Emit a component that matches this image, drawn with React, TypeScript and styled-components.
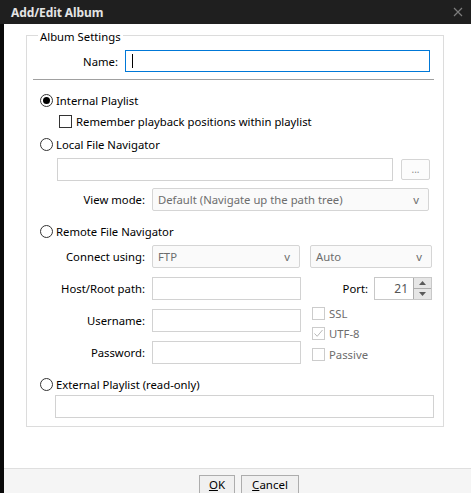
import React from 'react';
import styled, { createGlobalStyle } from 'styled-components';

const GlobalStyle = createGlobalStyle`
    html, body {
        margin: 0;
        padding: 0;
        background: #000;
    }
    body {
        font-family: "Noto Sans", "Open Sans", sans-serif;
        font-size: 11.3px;
        color: #000;
    }
`;

const Window = styled.div`
    width: 471px;
    height: 493px;
    display: flex;
    flex-direction: column;
    overflow: hidden;
    background: #0a0a0a;
`;

const TitleBar = styled.div`
    height: 24px;
    flex: none;
    display: flex;
    align-items: center;
    justify-content: space-between;
    background: #1f1f1f;
    padding: 0 8px 0 11px;
    box-sizing: border-box;
`;

const Title = styled.span`
    font-weight: 700;
    font-size: 12px;
    color: #e4e4e4;
    letter-spacing: -0.1px;
`;

const Body = styled.div`
    flex: 1;
    margin-left: 4px;
    display: flex;
    flex-direction: column;
    background: #fff;
    min-height: 0;
`;

const Content = styled.div`
    flex: 1;
    padding: 2px 0 0 22px;
`;

const Group = styled.fieldset`
    width: 415px;
    box-sizing: border-box;
    margin: 0;
    padding: 0 9px 8px 6px;
    border: 1px solid #dcdcdc;
`;

const Legend = styled.legend`
    margin-left: 5px;
    padding: 4px 2px 0;
    line-height: 14px;
`;

const Row = styled.div<{ $top: number; $indent?: number; $gap?: number }>`
    display: flex;
    align-items: center;
    margin-top: ${p => p.$top}px;
    padding-left: ${p => p.$indent ?? 0}px;
    gap: ${p => p.$gap ?? 7}px;
`;

const Label = styled.span<{ $width: number }>`
    width: ${p => p.$width}px;
    flex: none;
    text-align: right;
    white-space: nowrap;
`;

const TextBox = styled.div<{ $width: number; $focused?: boolean; $height?: number }>`
    width: ${p => p.$width}px;
    height: ${p => p.$height ?? 23}px;
    flex: none;
    box-sizing: border-box;
    border: 1px solid ${p => (p.$focused ? '#0078d7' : '#d2d2d2')};
    background: #fff;
    display: flex;
    align-items: center;
    padding-left: 6px;
`;

const Caret = styled.span`
    width: 1px;
    height: 14px;
    background: #000;
`;

const Separator = styled.div`
    height: 1px;
    background: #a0a0a0;
    margin-top: 7px;
`;

const OptionRow = styled.label<{ $top: number; $indent?: number; $disabled?: boolean }>`
    display: flex;
    align-items: center;
    height: 16px;
    gap: 3px;
    margin-top: ${p => p.$top}px;
    padding-left: ${p => p.$indent ?? 0}px;
    color: ${p => (p.$disabled ? '#6d6d6d' : '#000')};
    white-space: nowrap;
`;

const Radio = styled.span<{ $checked?: boolean }>`
    width: 13px;
    height: 13px;
    box-sizing: border-box;
    border: 1px solid #333;
    border-radius: 50%;
    flex: none;
    display: flex;
    align-items: center;
    justify-content: center;
    &::after {
        content: '';
        display: ${p => (p.$checked ? 'block' : 'none')};
        width: 7px;
        height: 7px;
        border-radius: 50%;
        background: #000;
    }
`;

const Check = styled.span<{ $disabled?: boolean }>`
    width: 13px;
    height: 13px;
    box-sizing: border-box;
    border: 1px solid ${p => (p.$disabled ? '#cccccc' : '#333')};
    flex: none;
    display: flex;
    align-items: center;
    justify-content: center;
    margin-right: 1px;
`;

const Combo = styled.div<{ $width: number }>`
    width: ${p => p.$width}px;
    height: 23px;
    flex: none;
    box-sizing: border-box;
    border: 1px solid #d5d5d5;
    border-radius: 2px;
    background: #fafafa;
    color: #6d6d6d;
    display: flex;
    align-items: center;
    justify-content: space-between;
    padding: 0 9px 0 5px;
    white-space: nowrap;
`;

const Browse = styled.div`
    width: 29px;
    height: 21px;
    box-sizing: border-box;
    border: 1px solid #d5d5d5;
    border-radius: 2px;
    background: #fcfcfc;
    color: #8a8a8a;
    display: flex;
    align-items: center;
    justify-content: center;
    font-size: 10px;
    padding-bottom: 2px;
`;

const RemoteGrid = styled.div`
    display: flex;
    margin-top: 9px;
`;

const Column = styled.div<{ $gap: number }>`
    display: flex;
    flex-direction: column;
    gap: ${p => p.$gap}px;
`;

const RightColumn = styled.div`
    display: flex;
    flex-direction: column;
    width: 122px;
    margin-left: 9px;
`;

const CheckStack = styled.div`
    display: flex;
    flex-direction: column;
    margin-top: 3px;
    padding-left: 2px;
`;

const CheckLine = styled.div`
    height: 20.5px;
    display: flex;
    align-items: center;
    gap: 3px;
    color: #6d6d6d;
`;

const Spin = styled.div`
    width: 58px;
    height: 23px;
    flex: none;
    box-sizing: border-box;
    border: 1px solid #c8c8c8;
    display: flex;
    background: #fff;
`;

const SpinValue = styled.span`
    flex: 1;
    text-align: right;
    padding-right: 5px;
    align-self: center;
    color: #555;
    font-size: 12px;
`;

const SpinArrows = styled.div`
    width: 17px;
    display: flex;
    flex-direction: column;
    border-left: 1px solid #adadad;
    gap: 1px;
    background: #adadad;
`;

const SpinButton = styled.div`
    flex: 1;
    background: #e6e6e6;
    display: flex;
    align-items: center;
    justify-content: center;
`;

const Footer = styled.div`
    height: 25px;
    box-sizing: border-box;
    flex: none;
    border-top: 1px solid #dfdfdf;
    background: #f5f5f5;
    display: flex;
    align-items: flex-start;
    gap: 6px;
    padding: 6px 0 0 195px;
`;

const Button = styled.div<{ $width: number }>`
    width: ${p => p.$width}px;
    height: 23px;
    flex: none;
    box-sizing: border-box;
    border: 1px solid #adadad;
    background: #f0f0f0;
    display: flex;
    justify-content: center;
    padding-top: 2px;
    font-size: 11.5px;
    line-height: 14px;
    & u {
        text-decoration-thickness: 1px;
        text-underline-offset: 1px;
    }
`;

const CloseIcon = () => (
    <svg width="10" height="10" viewBox="0 0 10 10">
        <path d="M1 1 L9 9 M9 1 L1 9" stroke="#7c7c7c" strokeWidth="1.2" />
    </svg>
);

const TickIcon = () => (
    <svg width="11" height="11" viewBox="0 0 11 11">
        <path d="M1.5 5.5 L4.2 8.3 L9.5 2" stroke="#b8b8b8" strokeWidth="1" fill="none" />
    </svg>
);

const Triangle = ({ up }: { up?: boolean }) => (
    <svg width="7" height="4" viewBox="0 0 7 4">
        <path d={up ? 'M0 4 L3.5 0 L7 4 Z' : 'M0 0 L3.5 4 L7 0 Z'} fill="#5a5a5a" />
    </svg>
);

export default function App() {
    return (
        <>
            <GlobalStyle />
            <Window>
                <TitleBar>
                    <Title>Add/Edit Album</Title>
                    <CloseIcon />
                </TitleBar>
                <Body>
                    <Content>
                        <Group>
                            <Legend>Album Settings</Legend>
                            <Row $top={6}>
                                <Label $width={85}>Name:</Label>
                                <TextBox $width={305} $height={22} $focused>
                                    <Caret />
                                </TextBox>
                            </Row>
                            <Separator />

                            <OptionRow $top={12} $indent={7}>
                                <Radio $checked />
                                Internal Playlist
                            </OptionRow>
                            <OptionRow $top={5} $indent={26}>
                                <Check />
                                Remember playback positions within playlist
                            </OptionRow>

                            <OptionRow $top={7} $indent={7}>
                                <Radio />
                                Local File Navigator
                            </OptionRow>
                            <Row $top={6} $indent={24} $gap={8}>
                                <TextBox $width={336} />
                                <Browse>...</Browse>
                            </Row>
                            <Row $top={7}>
                                <Label $width={112}>View mode:</Label>
                                <Combo $width={277}>
                                    <span>Default (Navigate up the path tree)</span>
                                    <span>v</span>
                                </Combo>
                            </Row>

                            <OptionRow $top={12} $indent={7}>
                                <Radio />
                                Remote File Navigator
                            </OptionRow>
                            <Row $top={6}>
                                <Label $width={112}>Connect using:</Label>
                                <Combo $width={148}>
                                    <span>FTP</span>
                                    <span>v</span>
                                </Combo>
                                <Combo $width={122} style={{ marginLeft: 3 }}>
                                    <span>Auto</span>
                                    <span>v</span>
                                </Combo>
                            </Row>
                            <RemoteGrid>
                                <Column $gap={9}>
                                    <Row $top={0}>
                                        <Label $width={112}>Host/Root path:</Label>
                                        <TextBox $width={149} />
                                    </Row>
                                    <Row $top={0}>
                                        <Label $width={112}>Username:</Label>
                                        <TextBox $width={149} />
                                    </Row>
                                    <Row $top={0}>
                                        <Label $width={112}>Password:</Label>
                                        <TextBox $width={149} />
                                    </Row>
                                </Column>
                                <RightColumn>
                                    <Row $top={0} $gap={6} style={{ justifyContent: 'flex-end' }}>
                                        <span>Port:</span>
                                        <Spin>
                                            <SpinValue>21</SpinValue>
                                            <SpinArrows>
                                                <SpinButton><Triangle up /></SpinButton>
                                                <SpinButton><Triangle /></SpinButton>
                                            </SpinArrows>
                                        </Spin>
                                    </Row>
                                    <CheckStack>
                                        <CheckLine>
                                            <Check $disabled />
                                            SSL
                                        </CheckLine>
                                        <CheckLine>
                                            <Check $disabled><TickIcon /></Check>
                                            UTF-8
                                        </CheckLine>
                                        <CheckLine>
                                            <Check $disabled />
                                            Passive
                                        </CheckLine>
                                    </CheckStack>
                                </RightColumn>
                            </RemoteGrid>

                            <OptionRow $top={12} $indent={7}>
                                <Radio />
                                External Playlist (read-only)
                            </OptionRow>
                            <Row $top={2} $indent={22}>
                                <TextBox $width={379} />
                            </Row>
                        </Group>
                    </Content>
                    <Footer>
                        <Button $width={36}><span><u>O</u>K</span></Button>
                        <Button $width={58}><span><u>C</u>ancel</span></Button>
                    </Footer>
                </Body>
            </Window>
        </>
    );
}
